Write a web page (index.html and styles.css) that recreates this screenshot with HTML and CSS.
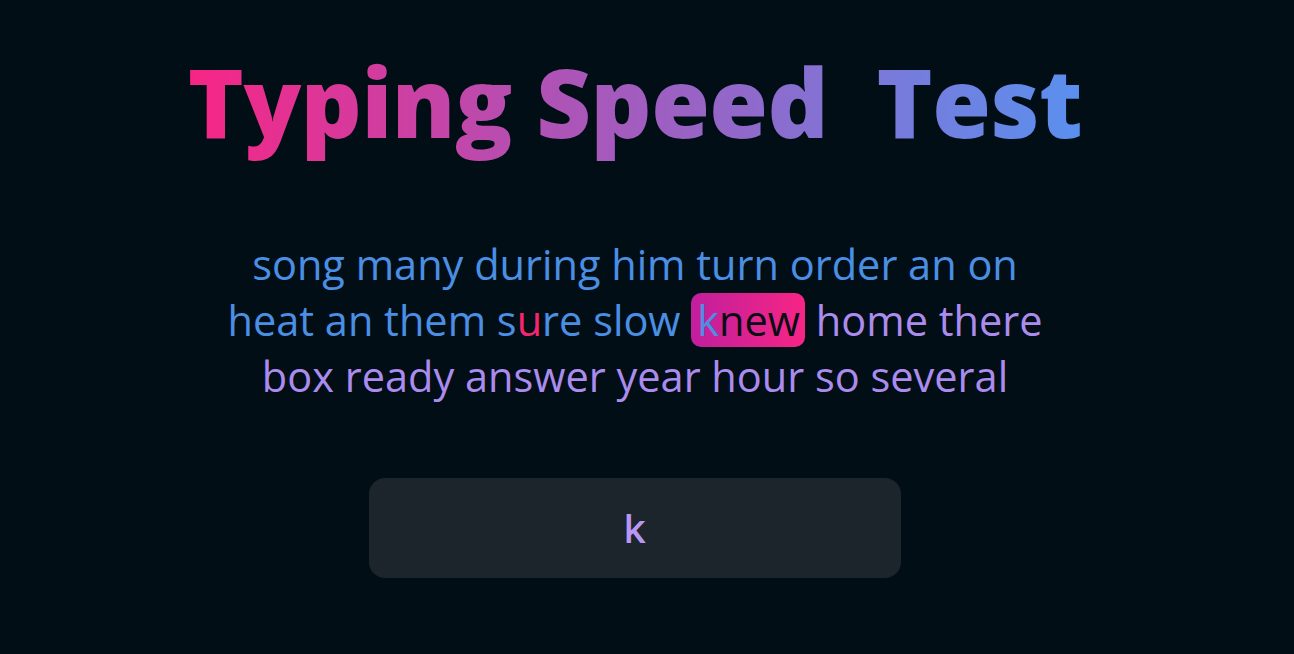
FILE: index.html
```html
<!DOCTYPE html>
<html lang="en">
<head>
<meta charset="utf-8">
<title>Typing Speed Test</title>
<link rel="stylesheet" href="styles.css">
</head>
<body>
<main class="app">
  <h1 class="title">Typing Speed&nbsp; Test</h1>
  <div class="words">
    <div class="line"><span class="typed">song many during him turn order an on</span></div>
    <div class="line"><span class="typed">heat an them s<span class="err">u</span>re slow</span> <span class="current"><span class="typed">k</span>new</span> <span class="todo">home there</span></div>
    <div class="line"><span class="todo">box ready answer year hour so several</span></div>
  </div>
  <div class="input">k</div>
</main>
</body>
</html>
```
FILE: styles.css
```css
html, body {
  margin: 0;
  padding: 0;
  background: #020e15;
  height: 100%;
}
.app {
  box-sizing: border-box;
  padding: 34px 24px 0 0;
  display: flex;
  flex-direction: column;
  align-items: center;
  font-family: "Open Sans", "Noto Sans", sans-serif;
}
.title {
  margin: 0;
  font-size: 95px;
  font-weight: 800;
  letter-spacing: -0.5px;
  line-height: 134px;
  background: linear-gradient(90deg, #f72585 0%, #b052b5 40%, #5a90ef 100%);
  -webkit-background-clip: text;
  background-clip: text;
  color: transparent;
}
.words {
  margin-top: 68px;
  font-size: 41.5px;
  font-weight: 400;
  line-height: 56px;
  text-align: center;
}
.typed { color: #4a8fe4; }
.err { color: #f2266f; }
.todo { color: #ab8cee; }
.current {
  display: inline-block;
  height: 54px;
  line-height: 54px;
  background: linear-gradient(90deg, #c01f9d, #f72585);
  border-radius: 10px;
  color: #0a0d14;
  padding: 0 5px 0 6px;
}
.input {
  margin-top: 74px;
  width: 532px;
  height: 100px;
  border-radius: 16px;
  background: #1b252b;
  color: #b896f6;
  font-size: 40px;
  font-weight: 500;
  display: flex;
  align-items: center;
  justify-content: center;
  font-family: "Inter", sans-serif;
}
```
